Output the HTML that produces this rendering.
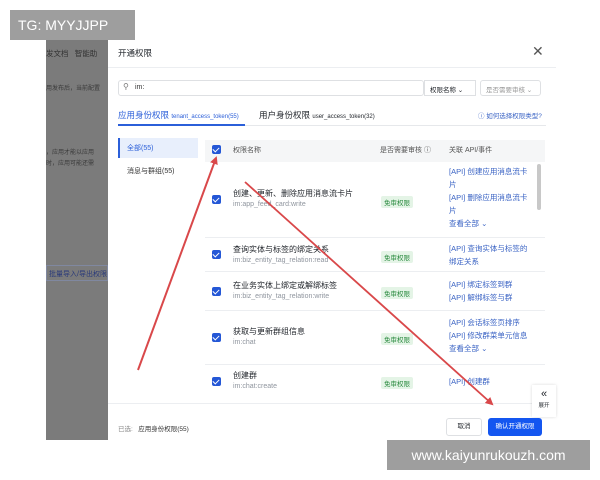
<!DOCTYPE html>
<html><head><meta charset="utf-8"><style>
*{margin:0;padding:0;box-sizing:border-box}
body{width:600px;height:480px;background:#fff;position:relative;overflow:hidden;font-family:"Liberation Sans","Noto Sans CJK SC",sans-serif;color:#1f2329}
.a{position:absolute;white-space:nowrap}
.cb{position:absolute;width:9px;height:9px;background:#2457d6;border-radius:2px}
.cb:after{content:"";position:absolute;left:2px;top:1px;width:3px;height:5px;border:solid #fff;border-width:0 1.3px 1.3px 0;transform:rotate(45deg)}
.t1{font-size:8px;color:#1f2329}
.t2{font-size:7px;color:#8f959e}
.tag{position:absolute;font-size:6.5px;color:#2a8a3f;background:#e4f4e6;padding:1px 3px;border-radius:2px}
.api{font-size:7.5px;color:#3a63c4;line-height:13px}
.hl{position:absolute;left:205px;width:340px;height:1px;background:#eceef1}
</style></head><body>
<div class="a" style="left:46px;top:40px;width:62px;height:400px;background:#7b7b7b"></div>
<div class="a" style="left:46px;top:48px;font-size:7.5px;color:#333">发文档&nbsp;&nbsp;&nbsp;智能助</div>
<div class="a" style="left:46px;top:83px;font-size:6px;color:#3a3a3a">用发布后，当前配置</div>
<div class="a" style="left:46px;top:148px;font-size:6px;color:#3a3a3a;line-height:11px">，应用才能以应用<br>时，应用可能还需</div>
<div class="a" style="left:46px;top:265px;width:62px;height:16px;border:1px solid #8088a0;font-size:7px;color:#2a3a7a;padding:3px 2px">批量导入/导出权限</div>
<div class="a" style="left:108px;top:40px;width:448px;height:400px;background:#fff"></div>
<div class="a" style="left:118px;top:47px;font-size:8.5px">开通权限</div>
<div class="a" style="left:532px;top:43px;font-size:14px;color:#555">✕</div>
<div class="a" style="left:108px;top:67px;width:448px;height:1px;background:#eceef1"></div>
<div class="a" style="left:118px;top:80px;width:306px;height:16px;border:1px solid #dee0e3;border-radius:3px"></div>
<div class="a" style="left:123px;top:82px;font-size:8px;color:#777">⚲</div>
<div class="a" style="left:135px;top:84px;font-size:7px;color:#333">im:</div>
<div class="a" style="left:424px;top:80px;width:52px;height:16px;border:1px solid #dee0e3;font-size:6.5px;padding:3px 5px">权限名称 ⌄</div>
<div class="a" style="left:480px;top:80px;width:61px;height:16px;border:1px solid #dee0e3;border-radius:3px;font-size:6.5px;color:#999;padding:3px 5px">是否需要审核 ⌄</div>
<div class="a" style="left:118px;top:109px;font-size:8.5px;color:#2b5fd9">应用身份权限 <span style="font-size:6px">tenant_access_token(55)</span></div>
<div class="a" style="left:259px;top:109px;font-size:8.5px">用户身份权限 <span style="font-size:6px">user_access_token(32)</span></div>
<div class="a" style="left:478px;top:110px;font-size:6.5px;color:#3a63c4">ⓘ 如何选择权限类型?</div>
<div class="a" style="left:118px;top:125px;width:428px;height:1px;background:#e6e8eb"></div>
<div class="a" style="left:118px;top:124px;width:127px;height:2px;background:#2b5fd9"></div>
<div class="a" style="left:118px;top:138px;width:80px;height:20px;background:#e8effc;border-left:2px solid #2b5fd9;font-size:7px;color:#2b5fd9;padding:5px 7px">全部(55)</div>
<div class="a" style="left:127px;top:166px;font-size:7px;color:#333">消息与群组(55)</div>
<div class="a" style="left:205px;top:140px;width:340px;height:22px;background:#f5f6f7"></div>
<div class="cb" style="left:212px;top:145px"></div>
<div class="a" style="left:233px;top:145px;font-size:7px;color:#555">权限名称</div>
<div class="a" style="left:380px;top:145px;font-size:7px;color:#555">是否需要审核 ⓘ</div>
<div class="a" style="left:449px;top:145px;font-size:7px;color:#555">关联 API/事件</div>
<div class="a" style="left:537px;top:164px;width:4px;height:46px;background:#c8c8c8;border-radius:2px"></div>
<div class="cb" style="left:212px;top:195px"></div>
<div class="a t1" style="left:233px;top:188px">创建、更新、删除应用消息流卡片</div>
<div class="a t2" style="left:233px;top:201px">im:app_feed_card:write</div>
<div class="tag" style="left:381px;top:196px">免审权限</div>
<div class="a api" style="left:449px;top:165px">[API] 创建应用消息流卡<br>片<br>[API] 删除应用消息流卡<br>片<br>查看全部 ⌄</div>
<div class="hl" style="top:237px"></div>
<div class="cb" style="left:212px;top:250px"></div>
<div class="a t1" style="left:233px;top:244px">查询实体与标签的绑定关系</div>
<div class="a t2" style="left:233px;top:257px">im:biz_entity_tag_relation:read</div>
<div class="tag" style="left:381px;top:251px">免审权限</div>
<div class="a api" style="left:449px;top:242px">[API] 查询实体与标签的<br>绑定关系</div>
<div class="hl" style="top:271px"></div>
<div class="cb" style="left:212px;top:287px"></div>
<div class="a t1" style="left:233px;top:280px">在业务实体上绑定或解绑标签</div>
<div class="a t2" style="left:233px;top:293px">im:biz_entity_tag_relation:write</div>
<div class="tag" style="left:381px;top:287px">免审权限</div>
<div class="a api" style="left:449px;top:278px">[API] 绑定标签到群<br>[API] 解绑标签与群</div>
<div class="hl" style="top:310px"></div>
<div class="cb" style="left:212px;top:333px"></div>
<div class="a t1" style="left:233px;top:326px">获取与更新群组信息</div>
<div class="a t2" style="left:233px;top:339px">im:chat</div>
<div class="tag" style="left:381px;top:333px">免审权限</div>
<div class="a api" style="left:449px;top:316px">[API] 会话标签页排序<br>[API] 修改群菜单元信息<br>查看全部 ⌄</div>
<div class="hl" style="top:364px"></div>
<div class="cb" style="left:212px;top:377px"></div>
<div class="a t1" style="left:233px;top:370px">创建群</div>
<div class="a t2" style="left:233px;top:383px">im:chat:create</div>
<div class="tag" style="left:381px;top:377px">免审权限</div>
<div class="a api" style="left:449px;top:375px">[API] 创建群</div>
<div class="a" style="left:108px;top:403px;width:448px;height:1px;background:#eceef1"></div>
<div class="a" style="left:532px;top:385px;width:24px;height:32px;background:#fff;box-shadow:0 0 3px rgba(0,0,0,.15);text-align:center"><div style="font-size:11px;line-height:14px;margin-top:2px">«</div><div style="font-size:5.5px">展开</div></div>
<div class="a" style="left:118px;top:423px;font-size:6.5px;color:#888">已选: &nbsp;&nbsp;<span style="color:#333">应用身份权限(55)</span></div>
<div class="a" style="left:446px;top:418px;width:36px;height:18px;border:1px solid #dee0e3;border-radius:3px;font-size:6.5px;text-align:center;line-height:16px">取消</div>
<div class="a" style="left:488px;top:418px;width:54px;height:18px;background:#1456f0;border-radius:3px;font-size:6.5px;color:#fff;text-align:center;line-height:18px">确认开通权限</div>
<svg class="a" style="left:0;top:0" width="600" height="480">
<defs><marker id="m" markerWidth="8" markerHeight="8" refX="6" refY="4" orient="auto" markerUnits="userSpaceOnUse"><path d="M0,0L8,4L0,8Z" fill="#d9484a"/></marker></defs>
<line x1="138" y1="370" x2="216" y2="158" stroke="#d9484a" stroke-width="2" marker-end="url(#m)"/>
<line x1="245" y1="182" x2="492" y2="404" stroke="#d9484a" stroke-width="1.8" marker-end="url(#m)"/>
</svg>
<div class="a" style="left:10px;top:10px;width:125px;height:30px;background:#9e9e9e;color:#fff;font-size:14px;line-height:30px;padding-left:8px">TG: MYYJJPP</div>
<div class="a" style="left:387px;top:440px;width:203px;height:30px;background:#9e9e9e;color:#fff;font-size:14px;line-height:30px;text-align:center">www.kaiyunrukouzh.com</div>
</body></html>
